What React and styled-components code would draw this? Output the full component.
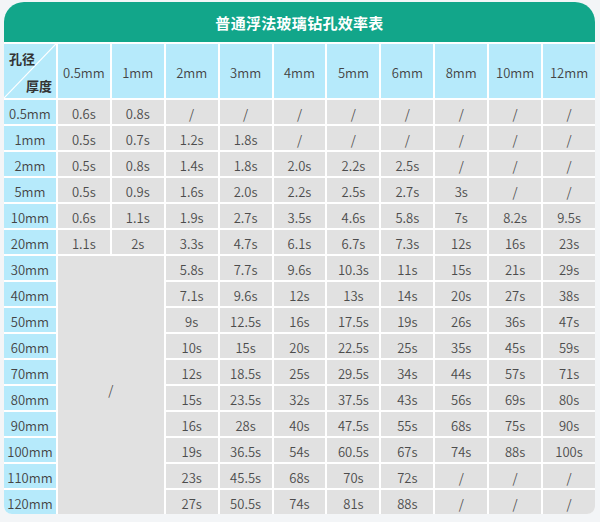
import React from "react";
import styled, { createGlobalStyle } from "styled-components";

const Global = createGlobalStyle`
  html, body { margin: 0; padding: 0; background: #f3f5f7; }
  body { padding: 2px 5px 7px 4px; font-family: "Noto Sans CJK SC", "Noto Sans", sans-serif; }
`;

const Card = styled.div`
  width: 591px;
  background: #ffffff;
  border-radius: 20px 20px 8px 8px;
  overflow: hidden;
  display: flex;
  flex-direction: column;
  gap: 2px;
`;

const Title = styled.div`
  height: 40px;
  background: #12a68a;
  color: #ffffff;
  font-size: 15px;
  font-weight: 700;
  display: flex;
  align-items: center;
  justify-content: center;
  letter-spacing: 0.3px;
`;

const Grid = styled.div`
  display: grid;
  grid-template-columns: repeat(11, 1fr);
  grid-template-rows: 54px repeat(16, 24px);
  gap: 2px;
`;

const Cell = styled.div`
  background: ${(p) => (p.$head ? "#b6eafb" : "#e1e1e1")};
  color: ${(p) => (p.$head ? "#444444" : "#4c4c4c")};
  font-size: 13px;
  font-weight: 350;
  display: flex;
  align-items: center;
  justify-content: center;
  padding-top: ${(p) => (p.$head ? "3px" : "2px")};
  box-sizing: border-box;
  white-space: nowrap;
`;

const Merged = styled(Cell)`
  grid-row: span 10;
  grid-column: span 2;
  padding-top: 8px;
`;

const Corner = styled.div`
  position: relative;
  background: #b6eafb;
  color: #333333;
  font-size: 13px;
  font-weight: 700;
`;

const CornerTop = styled.span`
  position: absolute;
  left: 5px;
  top: 5px;
`;

const CornerBottom = styled.span`
  position: absolute;
  right: 4px;
  bottom: 3px;
`;

const Diag = styled.svg`
  position: absolute;
  inset: 0;
  width: 100%;
  height: 100%;
`;

const cols = ["0.5mm", "1mm", "2mm", "3mm", "4mm", "5mm", "6mm", "8mm", "10mm", "12mm"];

const rows = [
  ["0.5mm", ["0.6s", "0.8s", "/", "/", "/", "/", "/", "/", "/", "/"]],
  ["1mm", ["0.5s", "0.7s", "1.2s", "1.8s", "/", "/", "/", "/", "/", "/"]],
  ["2mm", ["0.5s", "0.8s", "1.4s", "1.8s", "2.0s", "2.2s", "2.5s", "/", "/", "/"]],
  ["5mm", ["0.5s", "0.9s", "1.6s", "2.0s", "2.2s", "2.5s", "2.7s", "3s", "/", "/"]],
  ["10mm", ["0.6s", "1.1s", "1.9s", "2.7s", "3.5s", "4.6s", "5.8s", "7s", "8.2s", "9.5s"]],
  ["20mm", ["1.1s", "2s", "3.3s", "4.7s", "6.1s", "6.7s", "7.3s", "12s", "16s", "23s"]],
  ["30mm", ["5.8s", "7.7s", "9.6s", "10.3s", "11s", "15s", "21s", "29s"]],
  ["40mm", ["7.1s", "9.6s", "12s", "13s", "14s", "20s", "27s", "38s"]],
  ["50mm", ["9s", "12.5s", "16s", "17.5s", "19s", "26s", "36s", "47s"]],
  ["60mm", ["10s", "15s", "20s", "22.5s", "25s", "35s", "45s", "59s"]],
  ["70mm", ["12s", "18.5s", "25s", "29.5s", "34s", "44s", "57s", "71s"]],
  ["80mm", ["15s", "23.5s", "32s", "37.5s", "43s", "56s", "69s", "80s"]],
  ["90mm", ["16s", "28s", "40s", "47.5s", "55s", "68s", "75s", "90s"]],
  ["100mm", ["19s", "36.5s", "54s", "60.5s", "67s", "74s", "88s", "100s"]],
  ["110mm", ["23s", "45.5s", "68s", "70s", "72s", "/", "/", "/"]],
  ["120mm", ["27s", "50.5s", "74s", "81s", "88s", "/", "/", "/"]],
];

export default function App() {
  return (
    <>
      <Global />
      <Card>
        <Title>普通浮法玻璃钻孔效率表</Title>
        <Grid>
          <Corner>
            <Diag viewBox="0 0 100 100" preserveAspectRatio="none">
              <line x1="100" y1="0" x2="0" y2="100" stroke="#ffffff" strokeWidth="1.2" vectorEffect="non-scaling-stroke" />
            </Diag>
            <CornerTop>孔径</CornerTop>
            <CornerBottom>厚度</CornerBottom>
          </Corner>
          {cols.map((c) => (
            <Cell key={c} $head>{c}</Cell>
          ))}
          {rows.map(([label, vals], ri) => (
            <React.Fragment key={label}>
              <Cell $head>{label}</Cell>
              {ri === 6 && <Merged>/</Merged>}
              {vals.map((v, i) => (
                <Cell key={i}>{v}</Cell>
              ))}
            </React.Fragment>
          ))}
        </Grid>
      </Card>
    </>
  );
}
